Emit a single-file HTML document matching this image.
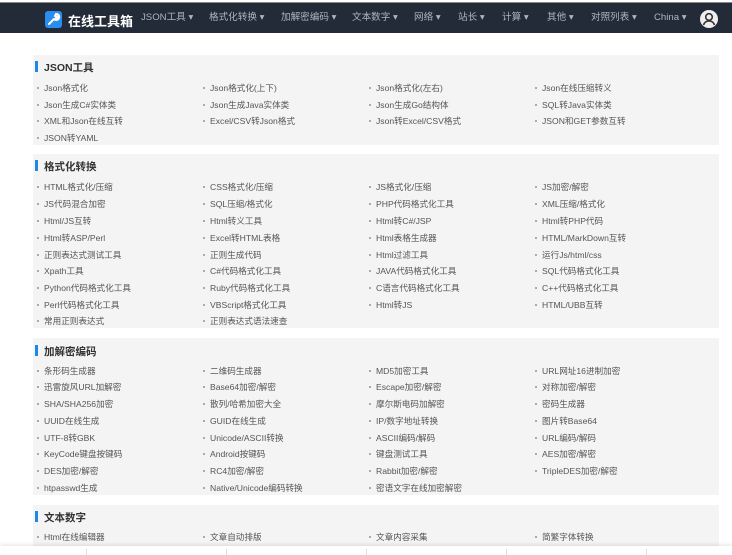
<!DOCTYPE html>
<html><head><meta charset="utf-8"><style>
*{margin:0;padding:0;box-sizing:border-box}
body{width:732px;height:555px;overflow:hidden;background:#fff;font-family:"Liberation Sans","Noto Sans CJK SC",sans-serif;position:relative}
.nav{position:absolute;left:0;top:2px;width:732px;height:31px;background:#222b37;border-top:1px solid #888}
.nav span{position:absolute;top:8px;line-height:14px;height:14px;color:#aeb5bd;font-size:9.6px;white-space:nowrap}
.logo{position:absolute;left:45px;top:8px;width:17px;height:17px;background:#2a8ef0;border-radius:3px}
.brand{position:absolute;left:68px;top:8px;color:#fff;font-weight:bold;font-size:13px}
.av{position:absolute;left:700px;top:7px;width:18px;height:18px;border-radius:50%;background:#eee}
.p{position:absolute;left:33px;width:686px;background:#f4f4f4}
.t{position:absolute;left:11px;font-size:10.5px;font-weight:bold;color:#333;padding-left:0}
.t:before{content:"";position:absolute;left:-9px;top:1px;width:3px;height:11px;background:#1e88e5}
.i{position:absolute;font-size:8.6px;color:#555;white-space:nowrap}
.i:before{content:"";background:#aaa;width:2px;height:2px;position:absolute;left:-7px;top:5px}
.foot{position:absolute;left:0;top:546px;width:732px;height:9px;background:#fff;box-shadow:0 -2px 3px rgba(0,0,0,.08)}
.foot b{position:absolute;top:3px;width:1px;height:6px;background:#ddd}
</style></head><body>
<div class="nav">
<div class="logo"><svg width="17" height="17" viewBox="0 0 17 17"><path d="M4 13 L9 8 M9 8 a3 3 0 1 0 2-5 l-1 2 1 1 2-1 a3 3 0 0 1-4 3" stroke="#fff" stroke-width="2" fill="none" stroke-linecap="round"/></svg></div>
<div class="brand">在线工具箱</div>
<span style="left:141px">JSON工具 ▾</span>
<span style="left:209px">格式化转换 ▾</span>
<span style="left:281px">加解密编码 ▾</span>
<span style="left:352px">文本数字 ▾</span>
<span style="left:414px">网络 ▾</span>
<span style="left:458px">站长 ▾</span>
<span style="left:502px">计算 ▾</span>
<span style="left:547px">其他 ▾</span>
<span style="left:591px">对照列表 ▾</span>
<span style="left:654px">China ▾</span>
<div class="av"><svg width="18" height="18" viewBox="0 0 18 18"><circle cx="9" cy="7" r="3.3" stroke="#333" stroke-width="1.6" fill="none"/><path d="M3.5 15c1-3 3-4 5.5-4s4.5 1 5.5 4" stroke="#333" stroke-width="1.6" fill="none"/></svg></div>
</div>

<div class="p" style="top:55px;height:90px">
<div class="t" style="top:5px">JSON工具</div>
<div class="i" style="left:11px;top:27px">Json格式化</div><div class="i" style="left:177px;top:27px">Json格式化(上下)</div><div class="i" style="left:343px;top:27px">Json格式化(左右)</div><div class="i" style="left:509px;top:27px">Json在线压缩转义</div>
<div class="i" style="left:11px;top:44px">Json生成C#实体类</div><div class="i" style="left:177px;top:44px">Json生成Java实体类</div><div class="i" style="left:343px;top:44px">Json生成Go结构体</div><div class="i" style="left:509px;top:44px">SQL转Java实体类</div>
<div class="i" style="left:11px;top:60px">XML和Json在线互转</div><div class="i" style="left:177px;top:60px">Excel/CSV转Json格式</div><div class="i" style="left:343px;top:60px">Json转Excel/CSV格式</div><div class="i" style="left:509px;top:60px">JSON和GET参数互转</div>
<div class="i" style="left:11px;top:77px">JSON转YAML</div>
</div>

<div class="p" style="top:154px;height:174px">
<div class="t" style="top:5px">格式化转换</div>
<div class="i" style="left:11px;top:27px">HTML格式化/压缩</div><div class="i" style="left:177px;top:27px">CSS格式化/压缩</div><div class="i" style="left:343px;top:27px">JS格式化/压缩</div><div class="i" style="left:509px;top:27px">JS加密/解密</div>
<div class="i" style="left:11px;top:44px">JS代码混合加密</div><div class="i" style="left:177px;top:44px">SQL压缩/格式化</div><div class="i" style="left:343px;top:44px">PHP代码格式化工具</div><div class="i" style="left:509px;top:44px">XML压缩/格式化</div>
<div class="i" style="left:11px;top:61px">Html/JS互转</div><div class="i" style="left:177px;top:61px">Html转义工具</div><div class="i" style="left:343px;top:61px">Html转C#/JSP</div><div class="i" style="left:509px;top:61px">Html转PHP代码</div>
<div class="i" style="left:11px;top:78px">Html转ASP/Perl</div><div class="i" style="left:177px;top:78px">Excel转HTML表格</div><div class="i" style="left:343px;top:78px">Html表格生成器</div><div class="i" style="left:509px;top:78px">HTML/MarkDown互转</div>
<div class="i" style="left:11px;top:95px">正则表达式测试工具</div><div class="i" style="left:177px;top:95px">正则生成代码</div><div class="i" style="left:343px;top:95px">Html过滤工具</div><div class="i" style="left:509px;top:95px">运行Js/html/css</div>
<div class="i" style="left:11px;top:111px">Xpath工具</div><div class="i" style="left:177px;top:111px">C#代码格式化工具</div><div class="i" style="left:343px;top:111px">JAVA代码格式化工具</div><div class="i" style="left:509px;top:111px">SQL代码格式化工具</div>
<div class="i" style="left:11px;top:128px">Python代码格式化工具</div><div class="i" style="left:177px;top:128px">Ruby代码格式化工具</div><div class="i" style="left:343px;top:128px">C语言代码格式化工具</div><div class="i" style="left:509px;top:128px">C++代码格式化工具</div>
<div class="i" style="left:11px;top:145px">Perl代码格式化工具</div><div class="i" style="left:177px;top:145px">VBScript格式化工具</div><div class="i" style="left:343px;top:145px">Html转JS</div><div class="i" style="left:509px;top:145px">HTML/UBB互转</div>
<div class="i" style="left:11px;top:161px">常用正则表达式</div><div class="i" style="left:177px;top:161px">正则表达式语法速查</div>
</div>

<div class="p" style="top:338px;height:157px">
<div class="t" style="top:6px">加解密编码</div>
<div class="i" style="left:11px;top:27px">条形码生成器</div><div class="i" style="left:177px;top:27px">二维码生成器</div><div class="i" style="left:343px;top:27px">MD5加密工具</div><div class="i" style="left:509px;top:27px">URL网址16进制加密</div>
<div class="i" style="left:11px;top:43px">迅雷旋风URL加解密</div><div class="i" style="left:177px;top:43px">Base64加密/解密</div><div class="i" style="left:343px;top:43px">Escape加密/解密</div><div class="i" style="left:509px;top:43px">对称加密/解密</div>
<div class="i" style="left:11px;top:60px">SHA/SHA256加密</div><div class="i" style="left:177px;top:60px">散列/哈希加密大全</div><div class="i" style="left:343px;top:60px">摩尔斯电码加解密</div><div class="i" style="left:509px;top:60px">密码生成器</div>
<div class="i" style="left:11px;top:77px">UUID在线生成</div><div class="i" style="left:177px;top:77px">GUID在线生成</div><div class="i" style="left:343px;top:77px">IP/数字地址转换</div><div class="i" style="left:509px;top:77px">图片转Base64</div>
<div class="i" style="left:11px;top:94px">UTF-8转GBK</div><div class="i" style="left:177px;top:94px">Unicode/ASCII转换</div><div class="i" style="left:343px;top:94px">ASCII编码/解码</div><div class="i" style="left:509px;top:94px">URL编码/解码</div>
<div class="i" style="left:11px;top:110px">KeyCode键盘按键码</div><div class="i" style="left:177px;top:110px">Android按键码</div><div class="i" style="left:343px;top:110px">键盘测试工具</div><div class="i" style="left:509px;top:110px">AES加密/解密</div>
<div class="i" style="left:11px;top:127px">DES加密/解密</div><div class="i" style="left:177px;top:127px">RC4加密/解密</div><div class="i" style="left:343px;top:127px">Rabbit加密/解密</div><div class="i" style="left:509px;top:127px">TripleDES加密/解密</div>
<div class="i" style="left:11px;top:144px">htpasswd生成</div><div class="i" style="left:177px;top:144px">Native/Unicode编码转换</div><div class="i" style="left:343px;top:144px">密语文字在线加密解密</div>
</div>

<div class="p" style="top:505px;height:50px">
<div class="t" style="top:5px">文本数字</div>
<div class="i" style="left:11px;top:26px">Html在线编辑器</div><div class="i" style="left:177px;top:26px">文章自动排版</div><div class="i" style="left:343px;top:26px">文章内容采集</div><div class="i" style="left:509px;top:26px">简繁字体转换</div>
</div>

<div class="foot"><b style="left:86px"></b><b style="left:226px"></b><b style="left:366px"></b><b style="left:506px"></b><b style="left:646px"></b></div>
</body></html>
